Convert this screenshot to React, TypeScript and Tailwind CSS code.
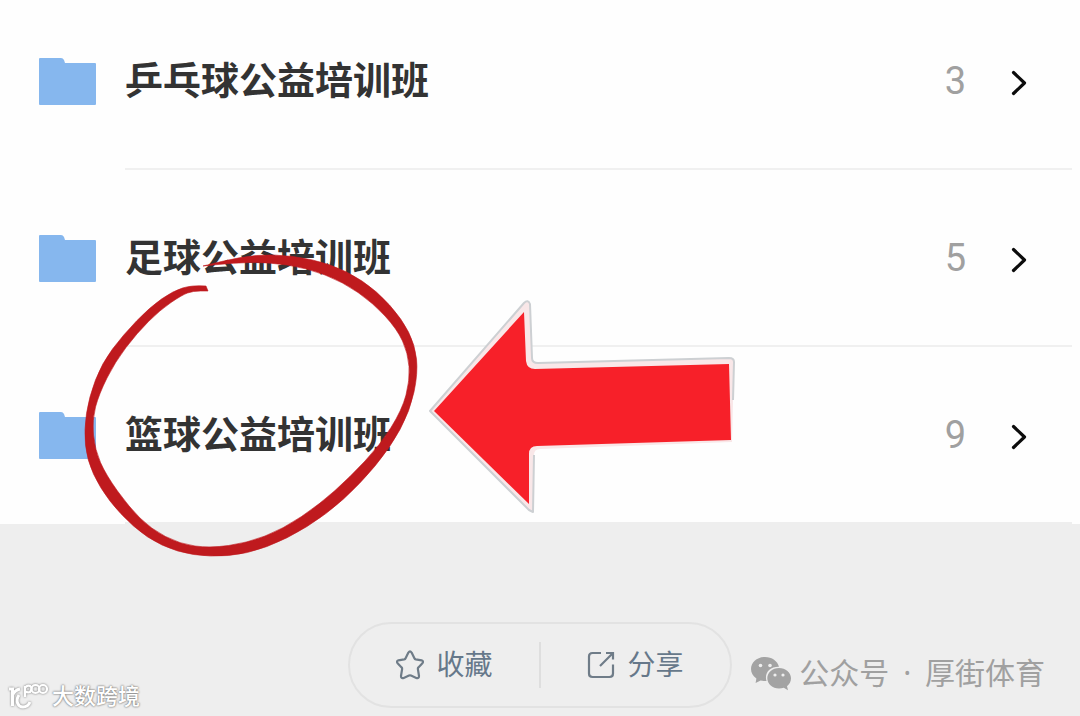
import React from "react";

type Course = { name: string; count: number };
type Point = [number, number];

const courses: Course[] = [
  { name: "乒乓球公益培训班", count: 3 },
  { name: "足球公益培训班", count: 5 },
  { name: "篮球公益培训班", count: 9 },
];

// outline of the marker stroke, outer edge first and then back along the inner edge
const markerOutline: Point[] = [
  [206, 286], [192, 285], [173, 291], [150, 307], [123, 335], [102, 363],
  [89, 397], [84, 430], [87, 460], [100, 488], [120, 514], [147, 538],
  [177, 552], [210, 557], [247, 554], [287, 539], [327, 514], [360, 484],
  [390, 448], [410, 411], [418, 373], [415, 345], [402, 319], [377, 291],
  [347, 271], [313, 259], [273, 254], [240, 257], [203, 266], [203, 266],
  [233, 263], [267, 262], [307, 268], [343, 282], [373, 303], [397, 329],
  [408, 353], [410, 380], [402, 410], [380, 445], [350, 477], [320, 504],
  [283, 529], [247, 543], [210, 548], [180, 544], [151, 529], [129, 507],
  [106, 475], [95, 450], [92, 420], [99, 394], [115, 362], [137, 333],
  [160, 310], [182, 295], [193, 291], [208, 291],
];

function smoothPath(points: Point[]) {
  let d = `M${points[0][0]} ${points[0][1]}`;
  for (let i = 1; i < points.length - 1; i++) {
    const [x, y] = points[i];
    const [nx, ny] = points[i + 1];
    d += `Q${x} ${y} ${(x + nx) / 2} ${(y + ny) / 2}`;
  }
  const last = points[points.length - 1];
  return d + `L${last[0]} ${last[1]}Z`;
}

function FolderIcon() {
  return (
    <svg viewBox="0 0 57 47" className="w-[57px] h-[47px] shrink-0">
      <path
        d="M1 0H22Q24 0 25 2L26 5H56Q57 5 57 6V46Q57 47 56 47H1Q0 47 0 46V1Q0 0 1 0Z"
        fill="#86b7ee"
      />
    </svg>
  );
}

function ChevronIcon() {
  return (
    <svg viewBox="0 0 16 26" className="w-4 h-[26px]" fill="none">
      <path
        d="M2.5 2.5L13.5 13L2.5 23.5"
        stroke="#0c0c0c"
        strokeWidth="3.2"
        strokeLinecap="round"
        strokeLinejoin="round"
      />
    </svg>
  );
}

function StarIcon() {
  return (
    <svg viewBox="0 0 28 30" className="w-7 h-[30px]" fill="none">
      <path
        d="M12.4 2.6Q14 0.200 15.600 2.600L18.400 8.200Q18.800 9.100 19.800 9.300L25.600 10.300Q28 11 26.400 13.200L22.400 17.400Q21.700 18.100 21.900 19.100L23 26Q23 29 20.300 27.900L15 25.600Q14 25.200 13 25.600L7.700 27.900Q5 29 5 26L6.100 19.100Q6.300 18.100 5.600 17.400L1.600 13.200Q0 11 2.400 10.300L8.200 9.300Q9.200 9.100 9.600 8.200Z"
        stroke="#6f7c88"
        strokeWidth="2.2"
        strokeLinejoin="round"
      />
    </svg>
  );
}

function ShareIcon() {
  return (
    <svg viewBox="0 0 28 28" className="size-7" fill="none">
      <path
        d="M14 2H5.500Q2 2 2 5.500V22.500Q2 26 5.500 26H22.500Q26 26 26 22.500V13.500M19 2H26V8.500M26 2L13 15"
        stroke="#6f7c88"
        strokeWidth="2.2"
      />
    </svg>
  );
}

function WechatIcon() {
  return (
    <svg viewBox="0 0 40 34" className="w-10 h-[34px]">
      <path
        d="M14 0C6 0 0 5.300 0 12C0 16 2 19.200 5.400 21.400L4.600 26L9.600 23.400Q12 24.100 15.500 24C13 16 19 9.500 28 9.800C26.500 4 21 0 14 0Z"
        fill="#a3a3a3"
      />
      <path
        d="M28 11C21.500 11 16.300 15.500 16.300 21.300C16.300 27 21.500 31.500 28 31.500Q30.500 31.500 32.800 30.700L37 33.200L36 29.200C38.500 27.300 40 24.600 40 21.300C40 15.500 34.500 11 28 11Z"
        fill="#a3a3a3"
      />
      <g fill="#eee">
        <circle cx="9.500" cy="8.500" r="1.800" />
        <circle cx="19" cy="8.500" r="1.800" />
        <circle cx="24" cy="18" r="1.600" />
        <circle cx="32" cy="18" r="1.600" />
      </g>
    </svg>
  );
}

function BrandLogo() {
  return (
    <svg
      viewBox="0 0 40 28"
      className="w-10 h-7 drop-shadow-[0_0_1px_#777]"
      fill="none"
      stroke="#fff"
      strokeWidth="3"
    >
      <path d="M1 7H4.500V24M4.500 13Q7 8 12 7M11 13C7 19 10 25 15 25Q20 25 22 20" />
      <g strokeWidth="2.2">
        <path d="M17 15V4M17 6Q19 2.500 22 4Q25 6 22 10Q19 11 17 9" />
        <circle cx="27.500" cy="7" r="4" />
        <circle cx="35" cy="7" r="4" />
      </g>
    </svg>
  );
}

function Annotations() {
  return (
    <svg
      viewBox="0 0 760 570"
      className="absolute left-0 top-0 w-[760px] h-[570px] pointer-events-none"
    >
      <path d={smoothPath(markerOutline)} fill="#bf1a1e" stroke="#bf1a1e" strokeWidth="0.600" />
      <path
        d="M430 411L524 303Q528 299 530 304L532 358Q532 363 538 363L729 358Q734 358 734 362L732 442L540 449Q534 449 534 455L533 512L529 510Z"
        fill="#f9e7e8"
      />
      <path
        d="M534 455L533 512L529 510L430 411L524 303Q528 299 530 304L532 358Q532 363 538 363L729 358Q734 358 734 362L733 400"
        fill="none"
        stroke="#cdd0d3"
        strokeWidth="2"
        strokeLinejoin="round"
      />
      <path
        d="M434 411L524 312L526 361Q527 369 535 369L729 364L731 440L537 446Q529 446 529 454V504Z"
        fill="#f72029"
      />
    </svg>
  );
}

function CourseRow({ name, count }: Course) {
  return (
    <li className="group">
      <a href="#" className="flex items-center h-[177px] pl-[39px] pr-2 gap-[29px]">
        <FolderIcon />
        <span className="flex flex-1 items-center h-full pr-[45px] border-b-2 border-[#f0f0f0] group-last:border-[#eee]">
          <span className="flex-1 pb-1.5 text-[38px] leading-[50px] font-bold text-[#333]">{name}</span>
          <span className="mr-[45px] text-[38px] leading-[50px] text-[#a0a0a0] font-['Roboto',sans-serif]">
            {count}
          </span>
          <span className="pt-1">
            <ChevronIcon />
          </span>
        </span>
      </a>
    </li>
  );
}

function App() {
  return (
    <main className="relative flex flex-col min-h-screen overflow-hidden bg-[#eee] font-['Noto_Sans_CJK_SC',sans-serif]">
      <ul className="-mt-[7px] bg-[#fefefe]">
        {courses.map((course) => (
          <CourseRow key={course.name} {...course} />
        ))}
      </ul>

      <footer className="flex justify-center pt-[98px] pb-2">
        <div className="flex items-center w-96 h-[86px] rounded-full border-2 border-[#e2e2e2] text-[28px] leading-10 text-[#66788a]">
          <button className="flex flex-1 items-center justify-center gap-3">
            <StarIcon />
            <span className="pb-1">收藏</span>
          </button>
          <span className="w-0.5 h-[46px] bg-[#dedede]" />
          <button className="flex flex-1 items-center justify-center gap-3">
            <ShareIcon />
            <span className="pb-1">分享</span>
          </button>
        </div>
      </footer>

      <Annotations />

      <div className="absolute right-[35px] bottom-4 flex items-center gap-2 text-[30px] leading-[46px] text-[#a0a0a0]">
        <WechatIcon />
        <span className="pb-1">
          公众号<span className="px-1.5 font-['Noto_Sans',sans-serif]"> · </span>厚街体育
        </span>
      </div>
      <div className="absolute left-2 bottom-0.5 flex items-center gap-1 text-[22px] leading-8 font-medium text-white [text-shadow:0_0_2px_#777,0_0_2px_#888]">
        <BrandLogo />
        <span className="pb-1">大数跨境</span>
      </div>
    </main>
  );
}

export default App;
